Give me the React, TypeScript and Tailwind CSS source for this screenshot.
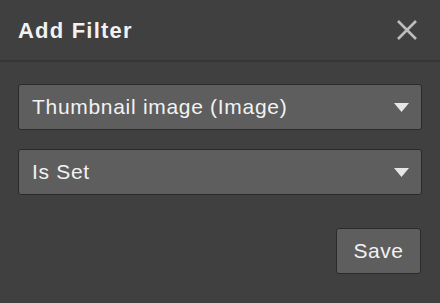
export default function App() {
  return (
    <div
      className="flex h-[303px] w-[440px] flex-col bg-[#404040] text-[#f2f2f2]"
      style={{ fontFamily: '"Liberation Sans", Arial, sans-serif' }}
    >
      <div className="flex h-[62px] shrink-0 items-center justify-between border-b-2 border-[#363636] pl-[18px] pr-[22px]">
        <h1 className="text-[22px] font-bold tracking-[1.2px]">Add Filter</h1>
        <svg width="22" height="22" viewBox="0 0 22 22" className="text-[#bdbdbd]">
          <path d="M2 2 L20 20 M20 2 L2 20" stroke="currentColor" strokeWidth="2.6" />
        </svg>
      </div>
      <div className="flex flex-col gap-[19px] px-[18px] pt-[22px]">
        <Select label="Thumbnail image (Image)" />
        <Select label="Is Set" />
      </div>
      <div className="flex justify-end px-[19px] pt-[33px]">
        <button className="h-[46px] w-[85px] rounded-[3px] border border-[#2a2a2a] bg-[#5e5e5e] text-[21px] tracking-[0.5px] text-[#f2f2f2]">
          Save
        </button>
      </div>
    </div>
  );
}

function Select({ label }: { label: string }) {
  return (
    <div className="flex h-[46px] items-center justify-between rounded-[3px] border border-[#2a2a2a] bg-[#5e5e5e] pl-[13px] pr-[12px]">
      <span className="text-[21px] tracking-[0.7px]">{label}</span>
      <svg width="15" height="9" viewBox="0 0 15 9">
        <path d="M0 0 H15 L7.5 9 Z" fill="#e6e6e6" />
      </svg>
    </div>
  );
}
